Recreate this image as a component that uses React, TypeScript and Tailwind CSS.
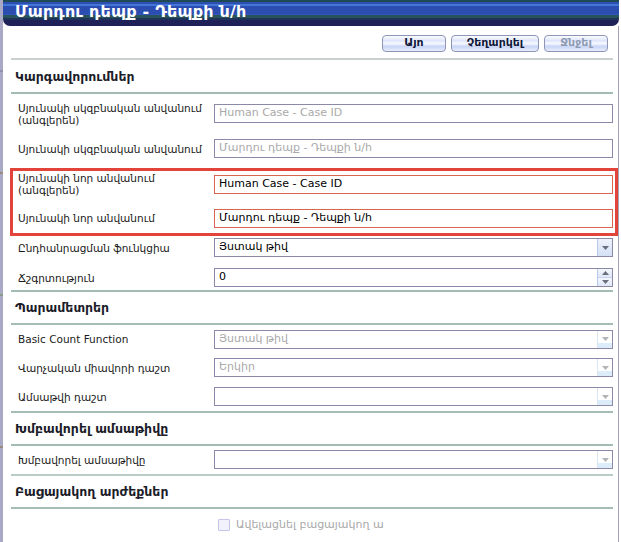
import React from "react";

const FONT = { fontFamily: '"DejaVu Sans", Verdana, sans-serif' };

function Arrow({ up, color }: { up?: boolean; color: string }) {
  return (
    <svg width="7" height="4" viewBox="0 0 7 4">
      {up ? <path d="M0 4 L3.5 0 L7 4 Z" fill={color} /> : <path d="M0 0 L7 0 L3.5 4 Z" fill={color} />}
    </svg>
  );
}

function Field({
  value,
  muted,
  red,
  select,
  spin,
  disabled,
}: {
  value?: string;
  muted?: boolean;
  red?: boolean;
  select?: boolean;
  spin?: boolean;
  disabled?: boolean;
}) {
  return (
    <div
      className={`flex h-[19px] w-[399px] items-stretch border bg-white ${
        red ? "border-[#d9644f]" : "border-[#8c88a8]"
      }`}
    >
      <div
        className={`flex flex-1 items-center overflow-hidden whitespace-nowrap px-[4px] text-[11px] ${
          muted ? "text-[#a9a9a9]" : "text-black"
        }`}
      >
        {value}
      </div>
      {select && (
        <div
          className={`flex w-[15px] items-center justify-center border-l ${
            disabled
              ? "border-[#d8e6f4] bg-[linear-gradient(#ffffff_0_70%,#dcecf8_70%)]"
              : "border-[#b8c8e8] bg-[linear-gradient(#eef2fc,#d4e0f6)]"
          }`}
        >
          <Arrow color={disabled ? "#b4b4b4" : "#6a6f80"} />
        </div>
      )}
      {spin && (
        <div className="flex w-[15px] flex-col border-l border-[#b8c8e8]">
          <div className="flex flex-1 items-center justify-center bg-[linear-gradient(#f4f7fd,#dfe7f7)]">
            <Arrow up color="#6a6f80" />
          </div>
          <div className="flex flex-1 items-center justify-center border-t border-[#c8d4ec] bg-[linear-gradient(#f4f7fd,#dfe7f7)]">
            <Arrow color="#6a6f80" />
          </div>
        </div>
      )}
    </div>
  );
}

function Label({ children }: { children: React.ReactNode }) {
  return <div className="w-[203px] pl-[7px] text-[10.5px] leading-[12px] text-[#1a1a1a]">{children}</div>;
}

function Row({
  label,
  h,
  children,
}: {
  label: React.ReactNode;
  h: string;
  children: React.ReactNode;
}) {
  return (
    <div className={`flex items-center ${h}`}>
      <Label>{label}</Label>
      {children}
    </div>
  );
}

function Header({ text, h }: { text: string; h: string }) {
  return (
    <div className={`flex items-center border-b-2 border-[#a3bdb3] pl-[4px] pt-[2px] ${h}`}>
      <span className="text-[12.5px] font-bold text-[#1c1c2a]">{text}</span>
    </div>
  );
}

function Btn({ text, disabled, w }: { text: string; disabled?: boolean; w: string }) {
  return (
    <div
      className={`flex h-[17px] items-center justify-center rounded-[4px] border border-[#8e96b8] bg-[linear-gradient(#fbfcff_0%,#dfe6fb_30%,#f6f8ff_50%,#c9d5f5_70%,#e9eefc_100%)] text-[11px] font-bold ${w} ${
        disabled ? "text-[#8e9bb4]" : "text-[#10183a]"
      }`}
    >
      {text}
    </div>
  );
}

export default function App() {
  return (
    <div className="relative flex h-[542px] w-[621px] overflow-hidden bg-white" style={FONT}>
      {/* left background strip */}
      <div className="flex w-[3px] flex-col bg-[#a9a9c6]">
        <div className="mt-[70px] h-[2px] bg-[#9090b0]" />
        <div className="mt-[100px] h-[2px] bg-[#9a8a80]" />
        <div className="mt-[120px] h-[2px] bg-[#8a9a8a]" />
        <div className="mt-[150px] h-[2px] bg-[#9a8a80]" />
      </div>
      <div className="flex w-[616px] flex-col">
        {/* title bar */}
        <div className="flex h-[26px] items-center rounded-b-[7px] bg-[linear-gradient(#1f4a55_0_2px,#2d4fb0_2px_4px,#4277d8_4px_6px,#2b4db0_6px_14px,#3058bc_14px_15px,#28535c_15px_18px,#1f3358_18px_20px,#1e2258_20px_26px)] pb-[3px] pl-[12px]">
          <span className="text-[16px] leading-[18px] font-bold tracking-[0.2px] text-white">Մարդու դեպք - Դեպքի ն/հ</span>
        </div>
        <div className="flex flex-1 flex-col border-r border-[#a4a4b8] pl-[8px] pr-[5px]">
          {/* buttons */}
          <div className="flex h-[34px] items-start justify-end gap-[5px] border-b-2 border-[#c8d0d0] pr-[5px] pt-[9px]">
            <Btn text="Այո" w="w-[64px]" />
            <Btn text="Չեղարկել" w="w-[88px]" />
            <Btn text="Ջնջել" w="w-[64px]" disabled />
          </div>

          <Header text="Կարգավորումներ" h="h-[34px]" />
          <Row
            h="h-[39px]"
            label={
              <>
                Սյունակի սկզբնական անվանում
                <br />
                (անգլերեն)
              </>
            }
          >
            <Field value="Human Case - Case ID" muted />
          </Row>
          <Row h="h-[31px]" label="Սյունակի սկզբնական անվանում">
            <Field value="Մարդու դեպք - Դեպքի ն/հ" muted />
          </Row>
          <Row
            h="h-[40px]"
            label={
              <>
                Սյունակի նոր անվանում
                <br />
                (անգլերեն)
              </>
            }
          >
            <Field value="Human Case - Case ID" red />
          </Row>
          <Row h="h-[28px]" label="Սյունակի նոր անվանում">
            <Field value="Մարդու դեպք - Դեպքի ն/հ" red />
          </Row>
          <Row h="h-[31px]" label="Ընդհանրացման ֆունկցիա">
            <Field value="Յստակ թիվ" select />
          </Row>
          <div className="flex h-[29px] items-start border-b-2 border-[#a3bdb3] pt-[2px]">
            <div className="flex h-[25px] items-center">
              <Label>Ճշգրտություն</Label>
              <Field value="0" spin />
            </div>
          </div>

          <Header text="Պարամետրեր" h="h-[33px]" />
          <Row h="h-[28px]" label="Basic Count Function">
            <Field value="Յստակ թիվ" muted select disabled />
          </Row>
          <Row h="h-[29px]" label="Վարչական միավորի դաշտ">
            <Field value="Երկիր" muted select disabled />
          </Row>
          <div className="flex h-[31px] items-start border-b-2 border-[#a3bdb3]">
            <div className="flex h-[29px] items-center">
              <Label>Ամսաթվի դաշտ</Label>
              <Field muted select disabled />
            </div>
          </div>

          <Header text="Խմբավորել ամսաթիվը" h="h-[33px]" />
          <div className="flex h-[30px] items-start border-b-2 border-[#b9cdc6]">
            <div className="flex h-[27px] items-center">
              <Label>Խմբավորել ամսաթիվը</Label>
              <Field muted select disabled />
            </div>
          </div>

          <Header text="Բացայակող արժեքներ" h="h-[33px]" />
          <div className="flex h-[32px] items-center pl-[207px]">
            <div className="h-[12px] w-[12px] rounded-[1px] border border-[#c4c4ec] bg-[#f2f2ff]" />
            <span className="ml-[6px] text-[11px] text-[#a8a8a8]">Ավելացնել բացայակող ա</span>
          </div>
        </div>
      </div>
      {/* red annotation box */}
      <div className="pointer-events-none absolute left-[10px] top-[168px] h-[68px] w-[608px] border-[3px] border-[#e2433b]" />
    </div>
  );
}
